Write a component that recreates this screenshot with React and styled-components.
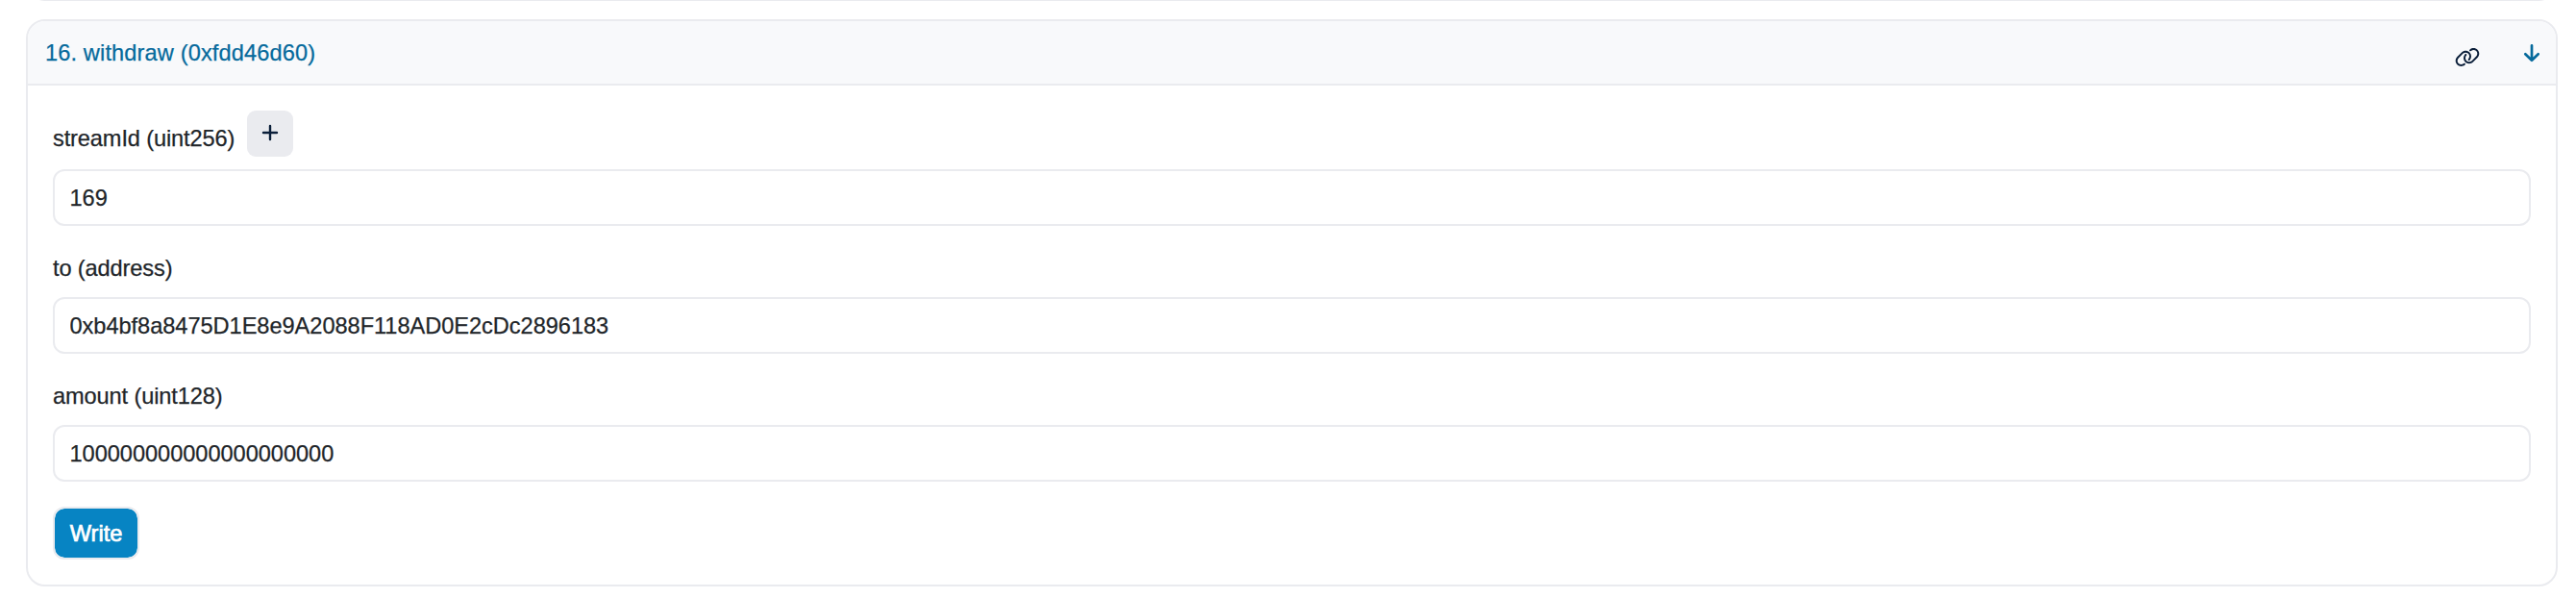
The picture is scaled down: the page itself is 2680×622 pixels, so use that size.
import React from 'react';
import styled, { createGlobalStyle } from 'styled-components';

const GlobalStyle = createGlobalStyle`
  *, *::before, *::after { box-sizing: border-box; }
  body {
    margin: 0;
    background: #fff;
    color: #212529;
    font-family: "Liberation Sans", Arial, sans-serif;
    font-size: 23.6px;
    line-height: 36px;
    -webkit-text-stroke: 0.25px currentColor;
  }
`;

const Page = styled.main`
  height: 622px;
  padding: 0 19px 0 27px;
  overflow: hidden;
`;

const PreviousCard = styled.div`
  height: 20px;
  margin-top: -19px;
  border: 2px solid #eaebef;
  border-radius: 0 0 20px 20px;
`;

const Card = styled.section`
  height: 590px;
  margin-top: 19px;
  border: 2px solid #eaebef;
  border-radius: 20px;
  overflow: hidden;
`;

const CardHeader = styled.header`
  display: flex;
  align-items: center;
  height: 67px;
  padding: 0 14px 0 18px;
  background: #f8f9fb;
  border-bottom: 2px solid #eaebef;
  color: #066a9c;
`;

const Title = styled.span`
  flex: 1;
  letter-spacing: 0.13px;
`;

const LinkIcon = styled.svg`
  display: block;
  flex: none;
  width: 26px;
  height: 21px;
  margin: 10px 46px 0 0;
  fill: #0b1f3a;
`;

const StrokeIcon = styled.svg`
  display: block;
  flex: none;
  overflow: visible;
  fill: none;
  stroke-linecap: round;
  stroke-linejoin: round;
`;

const ArrowIcon = styled(StrokeIcon)`
  width: 16px;
  height: 18px;
  margin: 1px 3px 0 0;
  stroke: #066a9c;
  stroke-width: 2.7;
`;

const CardBody = styled.div`
  padding: 26px 26px 0;
`;

const Field = styled.div`
  margin-bottom: 26px;
`;

const LabelRow = styled.div`
  display: flex;
  align-items: flex-start;
  height: ${(p) => (p.$withAction ? 61 : 48)}px;
`;

const Label = styled.label`
  width: ${(p) => (p.$withAction ? '202px' : 'auto')};
  padding-top: ${(p) => (p.$withAction ? 11 : 0)}px;
  letter-spacing: -0.12px;
  white-space: nowrap;
`;

const AddButton = styled.button`
  display: grid;
  place-items: center;
  width: 48px;
  height: 48px;
  padding: 0 0 2px;
  border: 0;
  border-radius: 9px;
  background: #eaebef;
`;

const PlusIcon = styled(StrokeIcon)`
  width: 16px;
  height: 16px;
  stroke: #0b1f3a;
  stroke-width: 2.4;
`;

const Input = styled.input`
  display: block;
  width: 100%;
  height: 59px;
  padding: 1px 16px 0 15.500px;
  border: 2px solid #eaebef;
  border-radius: 12px;
  background: #fff;
  color: #212529;
  font: inherit;
  letter-spacing: -0.04px;
  outline: none;
`;

const WriteButton = styled.button`
  display: flex;
  align-items: center;
  justify-content: center;
  width: 90px;
  height: 55px;
  padding: 0;
  border: 2px solid #eaebef;
  border-radius: 12px;
  background: #0784c3;
  background-clip: padding-box;
  color: #fff;
  font: inherit;
  -webkit-text-stroke: 0.7px #fff;
`;

export default function App() {
  return (
    <>
      <GlobalStyle />
      <Page>
        <PreviousCard />
        <Card>
          <CardHeader>
            <Title>16. withdraw (0xfdd46d60)</Title>
            <LinkIcon viewBox="0 0 640 512">
              <path d="M580.3 267.2c56.2-56.2 56.2-147.3 0-203.5C526.8 10.2 440.9 7.3 383.9 57.2l-6.1 5.4c-10 8.7-11 23.9-2.3 33.9s23.9 11 33.9 2.3l6.1-5.4c38-33.2 95.2-31.3 130.9 4.4c37.4 37.4 37.4 98.1 0 135.6L433.1 346.600c-37.400 37.400-98.200 37.400-135.600 0c-35.700-35.700-37.600-92.900-4.400-130.900l4.700-5.400c8.700-10 7.700-25.100-2.300-33.900s-25.100-7.700-33.900 2.300l-4.700 5.400c-49.800 57-46.900 142.900 6.600 196.400c56.200 56.200 147.300 56.200 203.500 0L580.300 267.200z" />
              <path d="M59.7 244.8C3.5 301 3.5 392.2 59.7 448.4c53.600 53.600 139.500 56.400 196.500 6.500l6.100-5.400c10-8.700 11-23.900 2.300-33.900s-23.900-11-33.900-2.300l-6.100 5.400c-38 33.200-95.200 31.300-130.900-4.400c-37.400-37.400-37.400-98.100 0-135.600L207 165.400c37.400-37.400 98.100-37.400 135.600 0c35.700 35.700 37.600 92.900 4.400 130.900l-5.400 6.100c-8.700 10-7.700 25.100 2.300 33.900s25.100 7.700 33.900-2.300l5.500-6.100c49.900-57 47-142.900-6.500-196.500c-56.200-56.200-147.300-56.200-203.500 0L59.700 244.800z" />
            </LinkIcon>
            <ArrowIcon viewBox="0 0 16 18">
              <path d="M8 1.300v15.400M1.300 10.300 8 16.800l6.700-6.500" />
            </ArrowIcon>
          </CardHeader>
          <CardBody>
            <Field>
              <LabelRow $withAction>
                <Label $withAction htmlFor="streamId">streamId (uint256)</Label>
                <AddButton aria-label="Add zeroes">
                  <PlusIcon viewBox="0 0 16 16">
                    <path d="M8 1v14M1 8h14" />
                  </PlusIcon>
                </AddButton>
              </LabelRow>
              <Input id="streamId" defaultValue="169" />
            </Field>
            <Field>
              <LabelRow>
                <Label htmlFor="to">to (address)</Label>
              </LabelRow>
              <Input id="to" defaultValue="0xb4bf8a8475D1E8e9A2088F118AD0E2cDc2896183" />
            </Field>
            <Field>
              <LabelRow>
                <Label htmlFor="amount">amount (uint128)</Label>
              </LabelRow>
              <Input id="amount" defaultValue="100000000000000000000" />
            </Field>
            <WriteButton>Write</WriteButton>
          </CardBody>
        </Card>
      </Page>
    </>
  );
}
